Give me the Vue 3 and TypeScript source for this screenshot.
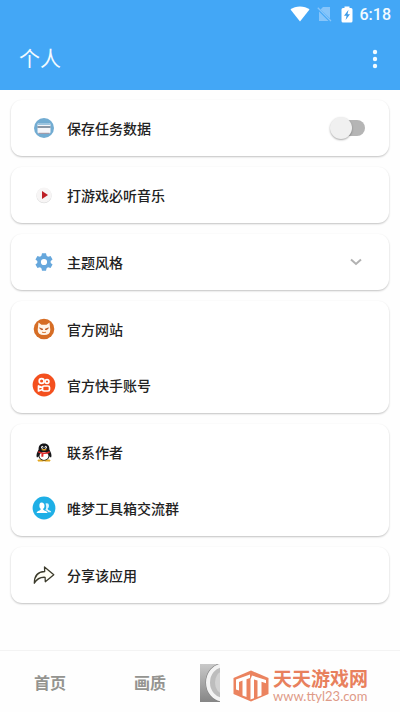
<script setup lang="ts">
import { ref } from 'vue'

type IconName = 'save' | 'play' | 'gear' | 'cat' | 'kuaishou' | 'qq' | 'group' | 'share'

interface Row {
  id: IconName
  label: string
  kind: 'switch' | 'button' | 'expand' | 'link'
}

const cards: Row[][] = [
  [{ id: 'save', label: '保存任务数据', kind: 'switch' }],
  [{ id: 'play', label: '打游戏必听音乐', kind: 'button' }],
  [{ id: 'gear', label: '主题风格', kind: 'expand' }],
  [
    { id: 'cat', label: '官方网站', kind: 'link' },
    { id: 'kuaishou', label: '官方快手账号', kind: 'link' },
  ],
  [
    { id: 'qq', label: '联系作者', kind: 'link' },
    { id: 'group', label: '唯梦工具箱交流群', kind: 'link' },
  ],
  [{ id: 'share', label: '分享该应用', kind: 'button' }],
]

const tabs: string[] = ['首页', '画质']
const saveData = ref<boolean>(false)

function tagFor(kind: Row['kind']): string {
  if (kind === 'switch') return 'label'
  return kind === 'link' ? 'a' : 'button'
}
</script>

<template>
  <div class="screen">
    <header class="top">
      <div class="status">
        <svg class="wifi" viewBox="0 0 20 16" aria-hidden="true">
          <path d="M.5 3.6C3 1.500 6.300.4 10 .4s7 1.100 9.500 3.200L10 15.500z" fill="#fff" />
        </svg>
        <svg class="sim" viewBox="0 0 15 16" aria-hidden="true">
          <path d="M6 1h7v11.500L3.500 3.500zM2 5.500 11.500 15H2z" fill="#86c5fa" />
          <path d="M.8 1.800 14 15" stroke="#86c5fa" stroke-width="1.300" />
        </svg>
        <svg class="battery" viewBox="0 0 12 17" aria-hidden="true">
          <path d="M3.500 2V.5h5V2H10q1.500 0 1.500 1.500v11.500q0 1.500-1.500 1.500H2Q.5 16.500.5 15V3.500Q.5 2 2 2z" fill="#fff" />
          <path d="M7.500 3.800 3 9.800h2.600L4.600 14 9 8.300H6.500z" fill="#3d9be8" />
        </svg>
        <time class="clock">6:18</time>
      </div>
      <div class="bar">
        <h1>个人</h1>
        <button class="more" type="button" aria-label="更多">
          <svg viewBox="0 0 6 20" aria-hidden="true">
            <circle cx="3" cy="3" r="2.200" /><circle cx="3" cy="10" r="2.200" /><circle cx="3" cy="17" r="2.200" />
          </svg>
        </button>
      </div>
    </header>

    <main class="list">
      <section v-for="(card, i) in cards" :key="i" class="card">
        <component
          :is="tagFor(row.kind)"
          v-for="row in card"
          :key="row.id"
          class="row"
          :href="row.kind === 'link' ? '#' : undefined"
          :for="row.kind === 'switch' ? 'save-data' : undefined"
          :type="row.kind === 'button' || row.kind === 'expand' ? 'button' : undefined"
        >
          <svg class="icon" viewBox="0 0 24 24" aria-hidden="true">
            <g v-if="row.id === 'save'">
              <circle cx="12" cy="12" r="10" fill="#72acd2" />
              <rect x="5.500" y="7" width="13" height="10.500" rx="1.500" fill="#f5f6fa" />
              <path d="M5.500 8.500q0-1.500 1.500-1.500h10q1.500 0 1.500 1.500v.5h-13z" fill="#9cc4df" />
              <path d="M5.500 11h13" stroke="#4f6379" stroke-width="1.300" />
              <path d="M6.500 17.300h11" stroke="#927c8c" stroke-width=".8" />
            </g>
            <g v-else-if="row.id === 'play'">
              <circle cx="12" cy="12.700" r="7.600" fill="#dedede" />
              <circle cx="12" cy="12" r="7.500" fill="#f7f5f5" />
              <path d="M10 8v8l6-4z" fill="#bd2026" />
            </g>
            <g v-else-if="row.id === 'gear'" fill="none" stroke="#66a7dc">
              <circle cx="12" cy="12" r="4.900" stroke-width="3.600" />
              <g fill="#66a7dc" stroke="none">
                <path v-for="n in 6" :key="n" d="M9.300 6.500 10 3.300h4l.7 3.200z" :transform="`rotate(${n * 60} 12 12)`" />
              </g>
            </g>
            <g v-else-if="row.id === 'cat'">
              <circle cx="12" cy="12" r="10.300" fill="#d66d25" />
              <path d="M6.500 5.500 9.500 7.700h5l3-2.200.8 7.300q.2 5.200-6.300 5.200t-6.300-5.200z" fill="#fff5e9" />
              <path d="m7.500 10.800 3.500 1.500q-2 1.500-3.500-1.500zm9 0L13 12.300q2 1.500 3.500-1.500z" fill="#b74d16" stroke="#b74d16" stroke-width=".6" />
              <path d="M10 15.200q2 1 4 0" fill="none" stroke="#d66d25" stroke-width=".9" />
            </g>
            <g v-else-if="row.id === 'kuaishou'">
              <circle cx="12" cy="12" r="11.400" fill="#f4501e" />
              <g fill="none" stroke="#fff" stroke-width="1.700">
                <circle cx="9.600" cy="8" r="2.400" /><circle cx="15" cy="8.500" r="1.900" />
                <rect x="10.500" y="13" width="7" height="5" rx="1.500" />
                <path d="m10.500 14.500-4-1.500v5l4-1.500" stroke-linejoin="round" />
              </g>
            </g>
            <g v-else-if="row.id === 'qq'">
              <path d="M7 20h4.500v1H6q-.5-1 1-1m5.500 0H17q1.500 0 1 1h-5.500z" fill="#f4b529" stroke="#e3a51d" />
              <path d="M12 3.500c-4 0-5.500 2.500-5.400 6C5.300 12 4 14.700 4.700 17c.3.900 1.200.2 1.700-.7C7 19 9 20.500 12 20.500s5-1.500 5.600-4.200c.5.900 1.400 1.600 1.700.7.700-2.300-.6-5-1.900-7.500.1-3.500-1.400-6-5.400-6" fill="#151518" />
              <ellipse cx="12" cy="16" rx="4.500" ry="3.900" fill="#fff" />
              <path d="M6.500 11q5.500 3 11 0l.3 1.800q-3.300 1.600-6.300 1.200l-.2 2.800-2-.1.200-3.100-3.200-.9z" fill="#e02828" />
              <ellipse cx="10.300" cy="7.200" rx="1.100" ry="1.500" fill="#fff" /><ellipse cx="13.700" cy="7.200" rx="1.100" ry="1.500" fill="#fff" />
              <circle cx="10.600" cy="7.300" r=".5" fill="#111" /><circle cx="13.400" cy="7.300" r=".5" fill="#111" />
              <ellipse cx="12" cy="9.700" rx="2.700" ry=".8" fill="#efad25" />
            </g>
            <g v-else-if="row.id === 'group'">
              <circle cx="12" cy="12" r="11.400" fill="#1eafe6" />
              <path d="M13.500 7.500q3.500-1 3.500 2.200 0 2-1.400 3 .2 1.200 2 1.900 1.700.7 1.700 1.700h-3q-.5-1.400-3-2.300 1.700-2.500.2-6.500" fill="#d8f3ff" />
              <path d="M9.500 6.500c2 0 3 1.300 3 3.200 0 1.500-.5 2.500-1.400 3.200.1 1 .8 1.300 2.200 1.800s2.200 1.100 2.200 2.300H4.700c0-1.200.7-1.800 2.100-2.300 1.300-.5 1.900-.9 2-1.800-.9-.7-1.400-1.700-1.400-3.200 0-1.900.5-3.200 2.100-3.200" fill="#fff" />
            </g>
            <path v-else d="M2.300 20.300c0-7 3.700-11.500 10.400-11.800L12.500 4l9.300 7.700-8.500 7-.2-4.400c-4.600-.3-8 1-10.800 6z" fill="#fffef5" stroke="#3c3b2c" stroke-width="1.300" stroke-linejoin="round" />
          </svg>
          <span class="label">{{ row.label }}</span>
          <input v-if="row.kind === 'switch'" id="save-data" v-model="saveData" class="switch" type="checkbox" role="switch" />
          <svg v-if="row.kind === 'expand'" class="chevron" viewBox="0 0 14 10" aria-hidden="true">
            <path d="m2 2.500 5 4.500 5-4.500" fill="none" stroke="#b1b1b1" stroke-width="2" />
          </svg>
        </component>
      </section>
    </main>

    <nav class="tabs">
      <a v-for="tab in tabs" :key="tab" class="tab" href="#">{{ tab }}</a>
      <div class="brand">
        <svg class="disc" viewBox="0 0 20 38" preserveAspectRatio="none" aria-hidden="true">
          <defs>
            <linearGradient id="shade" x1="0" y1="0" x2="0" y2="1">
              <stop offset="0" stop-color="#c9c9c9" /><stop offset="1" stop-color="#858585" />
            </linearGradient>
          </defs>
          <path d="M0 0h20v38H0z" fill="url(#shade)" />
          <ellipse cx="23" cy="18.500" rx="15" ry="17" fill="none" stroke="#808080" stroke-width="5" />
          <ellipse cx="23" cy="18.500" rx="15" ry="17" fill="#bdbdbd" stroke="#f3f3f3" stroke-width="4" />
          <ellipse cx="23" cy="18.500" rx="8" ry="11" fill="#d2d2d2" />
        </svg>
        <svg class="logo" viewBox="0 0 36 32" aria-hidden="true">
          <path d="M18 .5 35.500 8v16L18 31.500.5 24V8z" fill="#eb835f" />
          <path d="M3 9.500 17 4.500V8l-3.500 1.200V27l-4-1.500V10.600L6 12v8.500L3 19.500z" fill="#fff" />
          <path d="M19 5.500 33 10v3.200l-4.500-1.400v13.700l-4 1.500V10.500L21 9.500v18.800l-3.500 1.200V9.200z" fill="#fff" />
        </svg>
        <div class="words">
          <strong>天天游戏网</strong>
          <span>www.ttyl23.com</span>
        </div>
      </div>
    </nav>
  </div>
</template>

<style>
body {
  margin: 0;
  background: #fefefe;
}
</style>

<style scoped>
.screen {
  display: flex;
  flex-direction: column;
  min-height: 100vh;
  font-family: Roboto, "Noto Sans CJK SC", sans-serif;
  color: #222;
}

.top {
  background: #43a7f6;
  color: #f2fbff;
}

.status {
  display: flex;
  align-items: center;
  justify-content: flex-end;
  height: 28px;
  padding-right: 9px;
}

.wifi {
  width: 20px;
  height: 16px;
  margin-right: 7px;
}

.sim {
  width: 15px;
  height: 16px;
  margin-right: 9px;
}

.battery {
  width: 12px;
  height: 17px;
  margin-right: 7px;
}

.clock {
  font-size: 16px;
  font-weight: 500;
}

.bar {
  display: flex;
  align-items: center;
  justify-content: space-between;
  height: 62px;
  padding: 0 18px 0 19px;
}

h1 {
  margin: 0;
  font-size: 21px;
  font-weight: 400;
  line-height: 24px;
}

.more {
  display: flex;
  padding: 0 4px;
  border: 0;
  background: none;
}

.more svg {
  width: 6px;
  height: 20px;
  fill: #f2fbff;
}

.list {
  display: flex;
  flex: 1;
  flex-direction: column;
  gap: 11px;
  padding: 10px 11px;
}

.card {
  border-radius: 11px;
  background: #fff;
  box-shadow: 0 1px 2px rgba(0, 0, 0, 0.24);
}

.row {
  display: flex;
  align-items: center;
  box-sizing: border-box;
  width: 100%;
  height: 56px;
  padding: 0 23px 0 21px;
  border: 0;
  background: none;
  color: inherit;
  font: inherit;
  text-align: left;
  text-decoration: none;
}

.icon {
  flex: none;
  width: 24px;
  height: 24px;
}

.label {
  flex: 1;
  margin-left: 11px;
  font-size: 14px;
  font-weight: 500;
}

.switch {
  appearance: none;
  position: relative;
  width: 36px;
  height: 24px;
  margin: 0;
}

.switch::before {
  content: "";
  position: absolute;
  inset: 4px 1px 4px 6px;
  border-radius: 8px;
  background: #b5b5b5;
}

.switch::after {
  content: "";
  position: absolute;
  top: 1px;
  left: 0;
  width: 22px;
  height: 22px;
  border-radius: 50%;
  background: #f0f0f0;
  box-shadow: 0 1px 2px rgba(0, 0, 0, 0.35);
}

.switch:checked::after {
  left: 14px;
}

.chevron {
  width: 14px;
  height: 10px;
  margin-right: 3px;
}

.tabs {
  display: grid;
  grid-template-columns: 1fr 1fr 2fr;
  align-items: center;
  height: 61px;
  border-top: 1px solid #f3f3f3;
  background: #fefefe;
}

.tab {
  color: #949490;
  font-size: 16px;
  font-weight: 700;
  text-align: center;
  text-decoration: none;
}

.brand {
  display: flex;
  align-items: center;
  padding-top: 2px;
}

.disc {
  width: 20px;
  height: 38px;
}

.logo {
  width: 36px;
  height: 32px;
  margin: 6px 4px 0 13px;
}

.words {
  display: flex;
  flex-direction: column;
  padding-top: 8px;
  color: #e8805d;
}

.words strong {
  font-size: 19px;
  font-weight: 700;
  line-height: 18px;
}

.words span {
  color: #de9a87;
  font-family: Lato, sans-serif;
  font-size: 13px;
  line-height: 14px;
}
</style>
